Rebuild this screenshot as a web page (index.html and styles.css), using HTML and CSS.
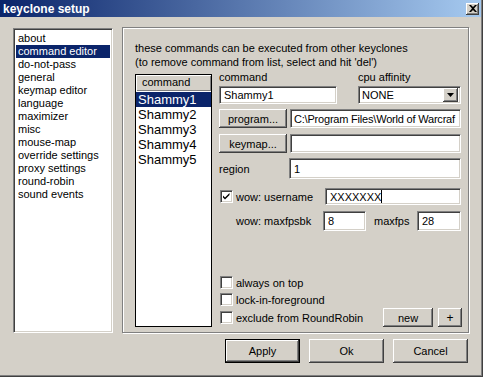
FILE: index.html
```html
<!DOCTYPE html>
<html lang="en">
<head>
    <meta charset="UTF-8">
    <title>keyclone setup</title>
    <link rel="stylesheet" href="styles.css">
</head>
<body>
    <div class="window">
        <div class="titlebar">
            <span class="title">keyclone setup</span>
            <button class="close-btn">
                <svg width="8" height="7" viewBox="0 0 8 7"><path d="M0 0h2l2 2 2-2h2L5 3.5 8 7H6L4 5 2 7H0l3-3.5z" fill="#000"/></svg>
            </button>
        </div>

        <div class="main">
            <ul class="nav sunken">
                <li>about</li>
                <li class="selected">command editor</li>
                <li>do-not-pass</li>
                <li>general</li>
                <li>keymap editor</li>
                <li>language</li>
                <li>maximizer</li>
                <li>misc</li>
                <li>mouse-map</li>
                <li>override settings</li>
                <li>proxy settings</li>
                <li>round-robin</li>
                <li>sound events</li>
            </ul>

            <div class="group">
                <p class="intro">these commands can be executed from other keyclones<br>(to remove command from list, select and hit 'del')</p>

                <div class="editor">
                    <div class="cmd-list">
                        <div class="cmd-header">command</div>
                        <div class="cmd-item selected">Shammy1</div>
                        <div class="cmd-item">Shammy2</div>
                        <div class="cmd-item">Shammy3</div>
                        <div class="cmd-item">Shammy4</div>
                        <div class="cmd-item">Shammy5</div>
                    </div>

                    <div class="form">
                        <div class="row-top">
                            <div class="field field-cmd">
                                <label>command</label>
                                <div class="input sunken h18">Shammy1</div>
                            </div>
                            <div class="field field-cpu">
                                <label>cpu affinity</label>
                                <div class="combo sunken h18">
                                    <span>NONE</span>
                                    <span class="combo-btn">
                                        <svg width="7" height="4" viewBox="0 0 7 4"><path d="M0 0h7L3.5 4z" fill="#000"/></svg>
                                    </span>
                                </div>
                            </div>
                        </div>

                        <div class="row row-program">
                            <button class="btn btn-side">program...</button>
                            <div class="input sunken grow h19 path">C:\Program Files\World of Warcraf</div>
                        </div>

                        <div class="row row-keymap">
                            <button class="btn btn-side">keymap...</button>
                            <div class="input sunken grow h19"></div>
                        </div>

                        <div class="row row-region">
                            <span class="lbl-region">region</span>
                            <div class="input sunken grow h21">1</div>
                        </div>

                        <div class="row row-wow">
                            <span class="check sunken checked">
                                <svg width="9" height="9" viewBox="0 0 9 9"><path d="M1 3.5l2 2 4.5-4.5v2L3 7.5 1 5.5z" fill="#000"/></svg>
                            </span>
                            <span class="lbl-user">wow: username</span>
                            <div class="input sunken grow h17">XXXXXXX<span class="caret"></span></div>
                        </div>

                        <div class="row row-fps">
                            <span class="lbl-fpsbk">wow: maxfpsbk</span>
                            <div class="input sunken h20 w43">8</div>
                            <span class="lbl-fps">maxfps</span>
                            <div class="input sunken h20 w44">28</div>
                        </div>

                        <div class="options">
                            <div class="opt"><span class="check sunken"></span><span>always on top</span></div>
                            <div class="opt"><span class="check sunken"></span><span>lock-in-foreground</span></div>
                            <div class="opt opt-last">
                                <span class="check sunken"></span><span>exclude from RoundRobin</span>
                                <button class="btn btn-new">new</button>
                                <button class="btn btn-plus">+</button>
                            </div>
                        </div>
                    </div>
                </div>
            </div>
        </div>

        <div class="actions">
            <button class="btn btn-action btn-default">Apply</button>
            <button class="btn btn-action">Ok</button>
            <button class="btn btn-action">Cancel</button>
        </div>
    </div>
</body>
</html>
```

FILE: styles.css
```css
* {
    box-sizing: border-box;
}

body {
    margin: 0;
    background-color: #d4d0c8;
    font-family: 'Liberation Sans', Arial, sans-serif;
    font-size: 11px;
    color: #000;
}

.window {
    width: 483px;
    height: 377px;
    background-color: #d4d0c8;
    border-right: 1px solid #404040;
    border-bottom: 1px solid #404040;
    box-shadow: inset -1px -1px 0 #808080;
    display: flex;
    flex-direction: column;
}

.titlebar {
    height: 17px;
    margin-right: 1px;
    background: linear-gradient(to right, #0a246a, #a6caf0);
    display: flex;
    align-items: center;
    justify-content: space-between;
    padding: 0 2px 0 3px;
}

.title {
    color: white;
    font-weight: bold;
    font-size: 12px;
}

.close-btn {
    width: 13px;
    height: 12px;
    padding: 0;
    display: flex;
    align-items: center;
    justify-content: center;
    background-color: #d4d0c8;
    border: none;
    box-shadow: inset -1px -1px 0 #404040, inset 1px 1px 0 #fff, inset -2px -2px 0 #808080;
}

/* sunken 3d field */
.sunken {
    background-color: white;
    border-top: 1px solid #808080;
    border-left: 1px solid #808080;
    border-bottom: 1px solid #fff;
    border-right: 1px solid #fff;
    box-shadow: inset 1px 1px 0 #404040, inset -1px -1px 0 #d4d0c8;
}

.main {
    display: flex;
    align-items: flex-start;
    gap: 9px;
    padding: 10px 0 0 13px;
}

.nav {
    list-style: none;
    margin: 1px 0 0 0;
    padding: 2px 2px;
    width: 100px;
    height: 305px;
}

.nav li {
    height: 13px;
    line-height: 13px;
    padding-left: 2px;
    white-space: nowrap;
}

.nav li:first-child {
    margin-top: 1px;
}

.nav li.selected {
    background-color: #0a246a;
    color: white;
}

.group {
    width: 347px;
    height: 306px;
    border: 1px solid #808080;
    box-shadow: inset 1px 1px 0 #fff, 1px 1px 0 #fff;
    padding: 13px 0 0 12px;
}

.intro {
    margin: 0;
    line-height: 14px;
}

.editor {
    display: flex;
    gap: 7px;
    margin-top: 1px;
}

.cmd-list {
    margin-top: 4px;
    width: 77px;
    height: 253px;
    background-color: white;
    border: 1px solid #000;
}

.cmd-header {
    height: 16px;
    line-height: 15px;
    padding-left: 6px;
    background-color: #d4d0c8;
    box-shadow: inset 1px 1px 0 #fff, inset -1px -1px 0 #808080;
}

.cmd-item {
    height: 15px;
    line-height: 15px;
    font-size: 13px;
    padding-left: 2px;
}

.cmd-header + .cmd-item {
    margin-top: 1px;
}

.cmd-item.selected {
    background-color: #0a246a;
    color: white;
}

.form {
    width: 242px;
    display: flex;
    flex-direction: column;
}

.row-top {
    display: flex;
    gap: 21px;
}

.field label {
    display: block;
    height: 14px;
    line-height: 14px;
    margin-bottom: 2px;
}

.field-cmd {
    width: 118px;
}

.field-cpu {
    width: 103px;
}

.input {
    padding-left: 4px;
    white-space: nowrap;
    overflow: hidden;
    display: flex;
    align-items: center;
}

.path {
    padding-left: 3px;
    letter-spacing: -0.2px;
}

.grow {
    flex: 1;
    min-width: 0;
}

.h17 { height: 17px; }
.h18 { height: 18px; }
.h19 { height: 19px; }
.h20 { height: 20px; }
.h21 { height: 21px; }
.w43 { width: 43px; }
.w44 { width: 44px; }

.combo {
    display: flex;
    align-items: center;
    justify-content: space-between;
    padding: 2px 2px 2px 3px;
}

.combo-btn {
    width: 15px;
    height: 14px;
    display: flex;
    align-items: center;
    justify-content: center;
    background-color: #d4d0c8;
    box-shadow: inset -1px -1px 0 #404040, inset 1px 1px 0 #fff, inset -2px -2px 0 #808080;
}

.row {
    display: flex;
    align-items: center;
}

.row-program {
    margin-top: 5px;
    gap: 3px;
}

.row-keymap {
    margin-top: 6px;
    gap: 3px;
}

.btn {
    font-family: 'Liberation Sans', Arial, sans-serif;
    font-size: 11px;
    color: #000;
    background-color: #d4d0c8;
    border: none;
    padding: 0;
    box-shadow: inset -1px -1px 0 #404040, inset 1px 1px 0 #fff, inset -2px -2px 0 #808080;
}

.btn-side {
    width: 68px;
    height: 19px;
}

.row-region {
    margin-top: 5px;
}

.lbl-region {
    width: 70px;
}

.row-wow {
    margin-top: 9px;
}

.check {
    width: 13px;
    height: 13px;
    flex: none;
    margin-left: 1px;
    display: flex;
    align-items: center;
    justify-content: center;
}

.lbl-user {
    width: 89px;
    margin-left: 3px;
}

.caret {
    display: inline-block;
    width: 1px;
    height: 13px;
    background-color: #000;
}

.row-fps {
    margin-top: 6px;
    padding-left: 17px;
}

.lbl-fpsbk {
    width: 87px;
}

.lbl-fps {
    width: 43px;
    margin-left: 8px;
}

.options {
    margin-top: 43px;
}

.opt {
    display: flex;
    align-items: center;
    height: 17px;
}

.opt .check {
    margin-right: 3px;
}

.opt-last {
    height: 19px;
}

.btn-new {
    margin-left: auto;
    width: 50px;
    height: 19px;
}

.btn-plus {
    margin-left: 5px;
    margin-right: -1px;
    width: 24px;
    height: 19px;
    font-size: 12px;
}

.actions {
    display: flex;
    justify-content: flex-end;
    gap: 9px;
    margin-top: 6px;
    padding-right: 14px;
}

.btn-action {
    width: 75px;
    height: 24px;
}

.btn-default {
    border: 1px solid #000;
}
```
